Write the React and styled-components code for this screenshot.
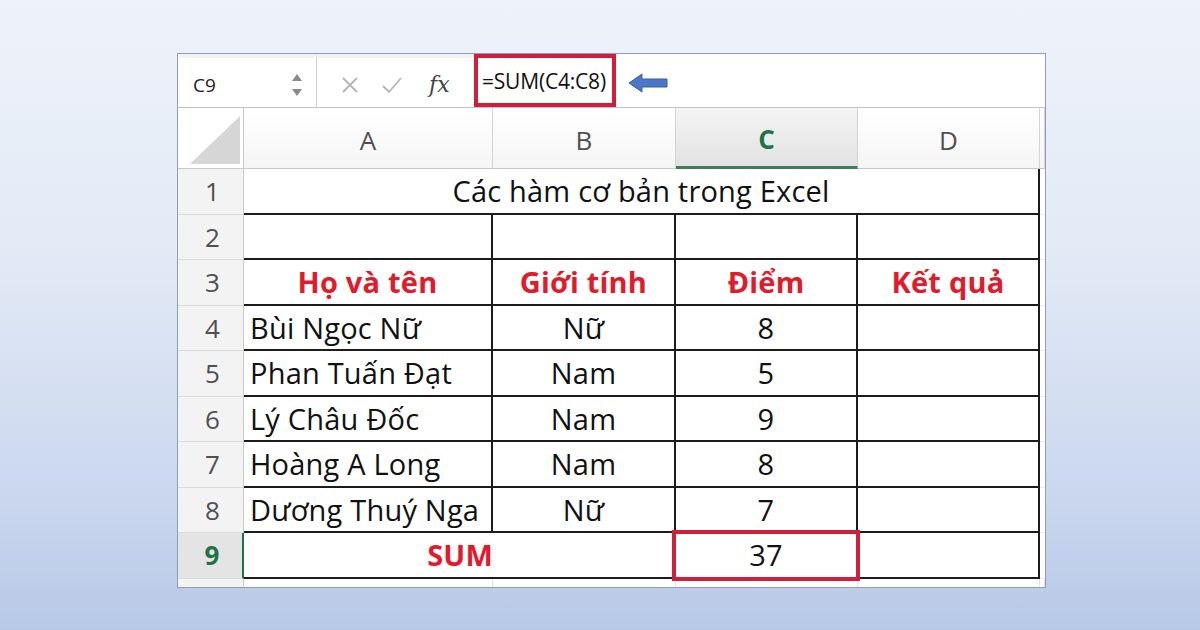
import React from "react";
import styled, { createGlobalStyle } from "styled-components";

const Global = createGlobalStyle`
  html, body { margin: 0; padding: 0; }
  body {
    width: 1200px; height: 630px; overflow: hidden;
    font-family: "Open Sans", "Noto Sans", sans-serif;
  }
`;

const Page = styled.div`
  width: 1200px;
  height: 630px;
  box-sizing: border-box;
  padding: 53px 0 0 177px;
  background: linear-gradient(180deg, #eef2fa 0%, #e3eaf6 40%, #c9d6ee 80%, #b7c8e6 100%);
`;

const Panel = styled.div`
  width: 869px;
  height: 535px;
  box-sizing: border-box;
  border: 1px solid #8e9db8;
  background: #ffffff;
  display: flex;
  flex-direction: column;
  overflow: hidden;
`;

const FormulaBar = styled.div`
  height: 53px;
  display: flex;
  align-items: stretch;
  border-bottom: 1px solid #c4c4c4;
  background: #ffffff;
`;

const NameBox = styled.div`
  width: 139px;
  display: flex;
  align-items: center;
  justify-content: space-between;
  box-sizing: border-box;
  padding: 4px 12px 0 15px;
  border-top: 4px solid #f3f3f3;
  border-right: 1px solid #d2d2d2;
  font-size: 19px;
  color: #222;
`;

const Spinner = styled.svg`
  width: 14px;
  height: 30px;
`;

const Tools = styled.div`
  width: 157px;
  display: flex;
  align-items: center;
  box-sizing: border-box;
  padding: 4px 0 0 22px;
  gap: 20px;
  border-top: 4px solid #f3f3f3;
`;

const ToolIcon = styled.svg`
  width: 22px;
  height: 22px;
`;

const Fx = styled.span`
  font-family: "DejaVu Serif", "Liberation Serif", serif;
  font-style: italic;
  font-size: 22px;
  color: #444;
  margin-left: 6px;
`;

const FormulaArea = styled.div`
  flex: 1;
  display: flex;
  align-items: stretch;
  gap: 12px;
`;

const FormulaHighlight = styled.div`
  width: 142px;
  box-sizing: border-box;
  border: 4px solid #cf1f3a;
  display: flex;
  align-items: center;
  padding-left: 4px;
  font-size: 21px;
  color: #111;
  white-space: nowrap;
  letter-spacing: -0.2px;
`;

const ArrowWrap = styled.div`
  display: flex;
  align-items: center;
  padding-top: 4px;
`;

const Sheet = styled.div`
  display: grid;
  grid-template-columns: 66px 249px 183px 182px 182px 1fr;
  grid-template-rows: 61px repeat(9, 45.5px) 1fr;
  flex: 1;
`;

const Corner = styled.div`
  background: #ffffff;
  border-right: 1px solid #c9c9c9;
  border-bottom: 1px solid #c9c9c9;
  display: flex;
  align-items: flex-end;
  justify-content: flex-end;
  padding: 0 3px 4px 0;
`;

const ColHead = styled.div`
  display: flex;
  align-items: center;
  justify-content: center;
  padding-top: 4px;
  box-sizing: border-box;
  font-size: 26px;
  color: ${(p) => (p.$active ? "#217346" : "#505050")};
  font-weight: ${(p) => (p.$active ? 700 : 400)};
  background: ${(p) =>
    p.$active
      ? "linear-gradient(180deg, #f4f4f4 0%, #e2e2e2 100%)"
      : "linear-gradient(180deg, #ffffff 0%, #f5f5f5 100%)"};
  border-right: 1px solid #d4d4d4;
  border-bottom: ${(p) => (p.$active ? "3px solid #3a7d58" : "1px solid #c9c9c9")};
`;

const RowHead = styled.div`
  display: flex;
  align-items: center;
  justify-content: center;
  font-size: 26px;
  color: ${(p) => (p.$active ? "#217346" : "#505050")};
  font-weight: ${(p) => (p.$active ? 700 : 400)};
  background: ${(p) => (p.$active ? "#e4e4e4" : "#f3f3f3")};
  border-right: ${(p) => (p.$active ? "2px solid #217346" : "1px solid #c9c9c9")};
  border-bottom: 1px solid #dcdcdc;
  padding-left: 4px;
`;

const Cell = styled.div`
  display: flex;
  align-items: center;
  box-sizing: border-box;
  justify-content: ${(p) => p.$align || "center"};
  padding: ${(p) => (p.$align === "flex-start" ? "0 0 0 6px" : "0")};
  grid-column: ${(p) => p.$span || "auto"};
  font-size: 29px;
  letter-spacing: 0.2px;
  white-space: nowrap;
  color: ${(p) => (p.$red ? "#e11b2b" : "#111")};
  font-weight: ${(p) => (p.$red ? 700 : 400)};
  border-bottom: 2px solid #1c1c1c;
  border-right: ${(p) => (p.$noRight ? "none" : "2px solid #1c1c1c")};
`;

const SelectedCell = styled(Cell)`
  position: relative;
`;

const SelectBox = styled.div`
  position: absolute;
  left: -4px;
  top: -3px;
  right: -4px;
  bottom: -4px;
  border: 4px solid #cf1f3a;
  pointer-events: none;
`;

const Filler = styled.div`
  border-bottom: 1px solid #ececec;
  background: #ffffff;
`;

const BottomStrip = styled.div`
  border-right: ${(p) => (p.$head ? "1px solid #c9c9c9" : "1px solid #e4e4e4")};
  background: ${(p) => (p.$head ? "#f3f3f3" : "#ffffff")};
`;

const rows = [
  ["Bùi Ngọc Nữ", "Nữ", "8"],
  ["Phan Tuấn Đạt", "Nam", "5"],
  ["Lý Châu Đốc", "Nam", "9"],
  ["Hoàng A Long", "Nam", "8"],
  ["Dương Thuý Nga", "Nữ", "7"],
];

export default function App() {
  return (
    <>
      <Global />
      <Page>
        <Panel>
          <FormulaBar>
            <NameBox>
              <span>C9</span>
              <Spinner viewBox="0 0 14 30">
                <path d="M7 4 L12 11 L2 11 Z" fill="#8a8a8a" />
                <path d="M7 26 L12 19 L2 19 Z" fill="#8a8a8a" />
              </Spinner>
            </NameBox>
            <Tools>
              <ToolIcon viewBox="0 0 22 22">
                <path d="M4 4 L18 18 M18 4 L4 18" stroke="#b5b5b5" strokeWidth="1.8" fill="none" />
              </ToolIcon>
              <ToolIcon viewBox="0 0 22 22">
                <path d="M2 12 L8 18 L20 4" stroke="#b5b5b5" strokeWidth="1.8" fill="none" />
              </ToolIcon>
              <Fx>fx</Fx>
            </Tools>
            <FormulaArea>
              <FormulaHighlight>=SUM(C4:C8)</FormulaHighlight>
              <ArrowWrap>
                <svg width="40" height="22" viewBox="0 0 40 22">
                  <path
                    d="M1 11 L14 2 L14 7 L39 7 L39 15 L14 15 L14 20 Z"
                    fill="#4a78c6"
                    stroke="#35609f"
                    strokeWidth="1"
                  />
                </svg>
              </ArrowWrap>
            </FormulaArea>
          </FormulaBar>
          <Sheet>
            <Corner>
              <svg width="50" height="48" viewBox="0 0 50 48">
                <path d="M0 48 L50 0 L50 48 Z" fill="#d6d6d6" />
              </svg>
            </Corner>
            <ColHead>A</ColHead>
            <ColHead>B</ColHead>
            <ColHead $active>C</ColHead>
            <ColHead>D</ColHead>
            <ColHead />

            <RowHead>1</RowHead>
            <Cell $span="span 4">Các hàm cơ bản trong Excel</Cell>
            <Filler />

            <RowHead>2</RowHead>
            <Cell />
            <Cell />
            <Cell />
            <Cell />
            <Filler />

            <RowHead>3</RowHead>
            <Cell $red>Họ và tên</Cell>
            <Cell $red>Giới tính</Cell>
            <Cell $red>Điểm</Cell>
            <Cell $red>Kết quả</Cell>
            <Filler />

            {rows.map((r, i) => (
              <React.Fragment key={i}>
                <RowHead>{i + 4}</RowHead>
                <Cell $align="flex-start">{r[0]}</Cell>
                <Cell>{r[1]}</Cell>
                <Cell>{r[2]}</Cell>
                <Cell />
                <Filler />
              </React.Fragment>
            ))}

            <RowHead $active>9</RowHead>
            <Cell $red $align="flex-end" $noRight>SUM</Cell>
            <Cell />
            <SelectedCell>
              37
              <SelectBox />
            </SelectedCell>
            <Cell />
            <Filler />

            <BottomStrip $head />
            <BottomStrip />
            <BottomStrip />
            <BottomStrip />
            <BottomStrip />
            <BottomStrip />
          </Sheet>
        </Panel>
      </Page>
    </>
  );
}
